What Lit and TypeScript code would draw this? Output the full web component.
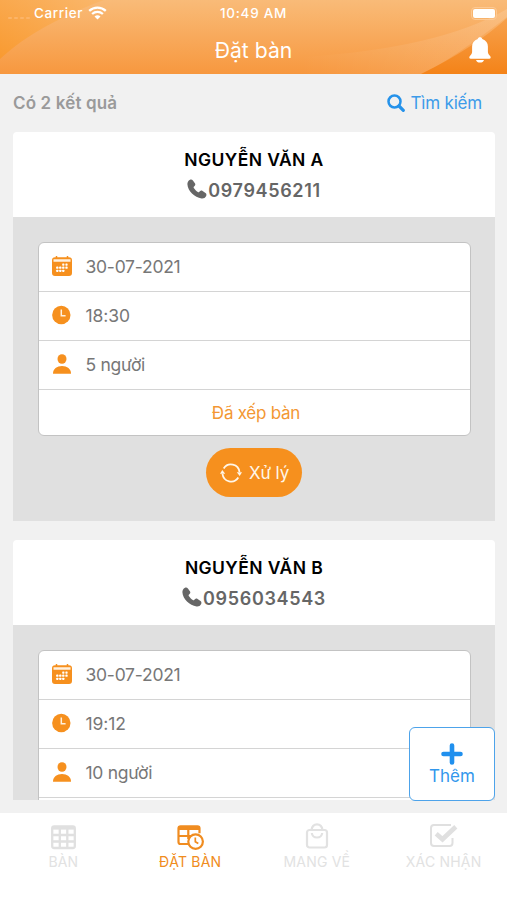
import { LitElement, html, css, svg } from "lit";
import { customElement, property } from "lit/decorators.js";

const wifi = svg`<svg width="19" height="14" viewBox="0 0 19 14" fill="none" stroke="#fff" stroke-width="2.3"><path d="M1.2 4.9a12 12 0 0 1 16.6 0M4.1 8a8 8 0 0 1 10.8 0"/><path d="M9.5 13.6 6.5 10.6a4.3 4.3 0 0 1 6 0z" fill="#fff" stroke="none"/></svg>`;

const bell = svg`<svg width="24" height="27" viewBox="0 0 24 27" fill="#fff"><path d="M12 .3c-1.200 0-2 .7-2.300 1.600C6 3 4.100 6 4.100 9.500v5.200c0 1.600-.6 2.600-2 4.100-1.300 1.400-1 2.900.7 2.900h18.400c1.700 0 2-1.500.7-2.900-1.400-1.500-2-2.500-2-4.100V9.500c0-3.500-1.900-6.500-5.600-7.600C14 1 13.200.3 12 .3z"/><path d="M8 23h8c-.4 1.700-1.900 2.600-4 2.600S8.400 24.700 8 23z"/></svg>`;

const search = svg`<svg width="18" height="18" viewBox="0 0 18 18" fill="none" stroke="#2592ea"><circle cx="7.500" cy="7.500" r="6" stroke-width="2.500"/><path d="m12 12 4.300 4.300" stroke-width="3.200" stroke-linecap="round"/></svg>`;

const phone = svg`<svg width="20" height="20" viewBox="0 0 20 20" fill="#666"><path d="M3 .7C4 .2 5.200.5 5.900 1.400l2 2.900c.7 1 .5 2-.3 2.700l-.8.8c-.3.4-.3.8 0 1.300 1 1.500 2.500 3 4 4 .5.300.9.300 1.300 0l.8-.8c.7-.8 1.700-1 2.700-.3l2.900 2c.9.700 1.200 1.900.7 2.900-.9 1.800-2.600 2.700-4.600 2.500C7.600 18.700.8 12 .4 5.300.3 3.300 1.200 1.600 3 .7z"/></svg>`;

const dots = [
  [11.2, 8.5], [14.4, 8.5],
  [5.2, 11.6], [8.2, 11.6], [11.2, 11.6], [14.4, 11.6],
  [5.2, 14.7], [8.2, 14.7], [11.2, 14.7],
];
const calendar = svg`<svg width="20" height="20" viewBox="0 0 20 20"><path d="M3 1.300h14a3 3 0 0 1 3 3V17a3 3 0 0 1-3 3H3a3 3 0 0 1-3-3V4.300a3 3 0 0 1 3-3z" fill="#f6901e"/><path d="M4.500 0v2M15.500 0v2" stroke="#f6901e" stroke-width="1.500"/><path d="M1.500 3.300h17v2.500h-17z" fill="#fff1df"/>${dots.map(([x, y]) => svg`<rect x=${x - 1} y=${y - 1} width="2.2" height="2.2" rx=".6" fill="#fff"/>`)}</svg>`;

const clock = svg`<svg width="20" height="20" viewBox="0 0 20 20"><circle cx="9.300" cy="10" r="9.200" fill="#f6901e"/><path d="M9.300 4.600v6.200h4.300" fill="none" stroke="#fff0dc" stroke-width="1.500"/></svg>`;

const person = svg`<svg width="20" height="20" viewBox="0 0 20 20" fill="#f6901e"><ellipse cx="10" cy="5" rx="4.500" ry="4.800"/><path d="M1 19.700c-.2-4.800 4-7.800 9-7.800s9.200 3 9 7.800z"/></svg>`;

const sync = svg`<svg width="22" height="20" viewBox="0 0 22 20" fill="none" stroke="#fff6e8" stroke-width="1.800"><path d="M3.700 5.400A8.600 8.600 0 0 1 19.500 9M18.300 14.600A8.600 8.600 0 0 1 2.500 11"/><path d="M22 9.200h-5.200l2.900 3.800zM0 10.800h5.200L2.300 7z" fill="#fff6e8" stroke="none"/></svg>`;

const plus = svg`<svg width="22" height="22" viewBox="0 0 22 22" stroke="#2090ee" stroke-width="4.600" stroke-linecap="round"><path d="M11 2.500v17M2.500 11h17"/></svg>`;

const tableIcon = svg`<svg width="28" height="28" viewBox="0 0 28 28" fill="none" stroke="#e0e0e0" stroke-width="2.300"><rect x="3.200" y="4.500" width="22.600" height="21.500" rx="2"/><path d="M3 5.800h23" stroke-width="3.600"/><path d="M3 13h23M3 19.500h23M10.800 5v21M18.300 5v21"/></svg>`;

const bookingIcon = svg`<svg width="28" height="28" viewBox="0 0 28 28" fill="none" stroke="#f08c20" stroke-width="2.200"><path d="M12 22H4.500a2 2 0 0 1-2-2V6.300a2 2 0 0 1 2-2h17a2 2 0 0 1 2 2v5"/><path d="M2.500 6h21" stroke-width="4"/><path d="M2.500 14H15M12.300 6v11"/><circle cx="19.600" cy="19.600" r="7.300" fill="#fff"/><path d="M19.300 15.400v4.400l3 1.800" stroke-width="1.700"/></svg>`;

const bagIcon = svg`<svg width="28" height="28" viewBox="0 0 28 28" fill="none" stroke="#e2e2e2" stroke-width="2.200"><rect x="4" y="8" width="20" height="17.500" rx="2.500"/><path d="M8.500 8C9 4 11 2.300 14 2.300S19 4 19.500 8M8.800 11c.4 3.500 2.300 4.500 5.200 4.500s4.800-1 5.200-4.500"/></svg>`;

const checkIcon = svg`<svg width="28" height="28" viewBox="0 0 28 28" fill="none" stroke="#e0e0e0" stroke-width="2"><path d="M21 3H4a3 3 0 0 0-3 3v15a3 3 0 0 0 3 3h15.500a3 3 0 0 0 3-3v-5"/><path d="m6.200 11.800 6.300 5.500L25.800 4.800" stroke-width="4.600"/></svg>`;

@customElement("booking-card")
class BookingCard extends LitElement {
  @property() name = "";
  @property() phone = "";
  @property() date = "";
  @property() time = "";
  @property() guests = "";

  static styles = css`
    :host { display: block; }
    * { box-sizing: border-box; }
    svg { display: block; flex: none; }
    .head { height: 85px; background: #fff; border-radius: 4px 4px 0 0; display: flex; flex-direction: column; align-items: center; padding-top: 16px; }
    .name { font-size: 17.5px; line-height: 24px; font-weight: 600; color: #000; letter-spacing: 0.4px; }
    .phone { display: flex; align-items: center; gap: 1px; margin-top: 7px; color: #666; font-size: 18px; line-height: 24px; font-weight: 600; letter-spacing: 0.65px; }
    .phone svg { position: relative; top: -2px; }
    .body { background: #e0e0e0; height: 304px; padding: 25px 24px 0; display: flex; flex-direction: column; align-items: center; }
    .box { width: 433px; height: 194px; border: 1px solid #c3c3c3; border-radius: 6px; background: #fff; overflow: hidden; }
    .row { height: 49px; padding: 0 0 2px 13px; display: flex; align-items: center; gap: 14px; border-bottom: 1px solid #d4d4d4; font-size: 17.5px; color: #777; }
    .status { height: 45px; display: flex; align-items: center; justify-content: center; color: #f39733; font-size: 17px; }
    .date { letter-spacing: -0.25px; }
    .time { letter-spacing: -0.1px; }
    .guests { letter-spacing: -0.3px; }
    .status span { letter-spacing: -0.25px; margin-left: 4px; }
    .process { margin-top: 12px; width: 96px; height: 49px; border-radius: 25px; background: #f6901e; display: flex; align-items: center; padding-left: 14px; gap: 7px; color: #fff6e8; font-size: 17px; letter-spacing: -0.1px; flex: none; }
  `;

  render() {
    return html`
      <div class="head">
        <div class="name">${this.name}</div>
        <div class="phone">${phone}<span>${this.phone}</span></div>
      </div>
      <div class="body">
        <div class="box">
          <div class="row">${calendar}<span class="date">${this.date}</span></div>
          <div class="row">${clock}<span class="time">${this.time}</span></div>
          <div class="row">${person}<span class="guests">${this.guests}</span></div>
          <div class="status"><span>Đã xếp bàn</span></div>
        </div>
        <div class="process">${sync}<span>Xử lý</span></div>
      </div>
    `;
  }
}

@customElement("app-root")
class AppRoot extends LitElement {
  static styles = css`
    :host { display: flex; flex-direction: column; width: 507px; height: 900px; overflow: hidden; background: #f1f1f1; font-family: Inter, "Noto Sans", sans-serif; position: relative; }
    * { box-sizing: border-box; }
    svg { display: block; flex: none; }
    header { height: 74px; flex: none; position: relative; color: #fff; overflow: hidden; }
    .art { position: absolute; inset: 0; }
    .statusbar { position: relative; height: 26px; display: grid; grid-template-columns: 1fr auto 1fr; align-items: center; font-size: 13.5px; font-weight: 500; }
    .carrier { display: flex; align-items: center; padding-left: 8px; }
    .carrier span { letter-spacing: 0.6px; margin-right: 5px; }
    .signal { display: flex; gap: 2px; width: 26px; padding-top: 9px; }
    .signal i { width: 4px; height: 2px; border-radius: 1px; background: #fcb468; }
    .clock { letter-spacing: 0.7px; }
    .power { display: flex; justify-content: flex-end; padding-right: 10px; }
    .battery { width: 26px; height: 13px; border: 1px solid #fcc994; border-radius: 4px; padding: 1px; }
    .charge { height: 9px; border-radius: 2px; background: #fff; }
    .titlebar { position: relative; height: 48px; display: grid; grid-template-columns: 1fr auto 1fr; align-items: center; }
    .title { grid-column: 2; font-size: 21.2px; }
    .bell { justify-self: end; margin-right: 15px; }
    .toolbar { height: 58px; flex: none; display: flex; align-items: center; justify-content: space-between; padding: 0 25px 0 13px; }
    .count { font-size: 17px; font-weight: 600; color: #9a9a9a; letter-spacing: 0.15px; }
    .search { display: flex; align-items: center; gap: 6px; color: #3c9be9; font-size: 17px; letter-spacing: -0.2px; }
    .list { height: 668px; flex: none; overflow: hidden; padding: 0 12px 0 13px; display: flex; flex-direction: column; gap: 19px; }
    .list > * { flex: none; }
    .add { position: absolute; left: 409px; top: 727px; width: 86px; height: 74px; border: 1.5px solid #4da3ea; border-radius: 6px; background: #fff; display: flex; flex-direction: column; align-items: center; padding-top: 15px; color: #3297ec; font-size: 17px; line-height: 22px; }
    nav { margin-top: 13px; height: 87px; flex: none; background: #fff; display: grid; grid-template-columns: repeat(4, 1fr); padding-top: 9px; }
    .tab { display: flex; flex-direction: column; align-items: center; color: #e2e2e2; font-size: 14px; line-height: 20px; gap: 2px; white-space: nowrap; letter-spacing: 0.2px; }
    .tab.active { color: #f08c20; }
  `;

  private tabs = [
    { label: "BÀN", icon: tableIcon },
    { label: "ĐẶT BÀN", icon: bookingIcon, active: true },
    { label: "MANG VỀ", icon: bagIcon },
    { label: "XÁC NHẬN", icon: checkIcon },
  ];

  render() {
    return html`
      <header>
        <svg class="art" width="507" height="74" viewBox="0 0 507 74">
          <defs>
            <linearGradient id="base" x1="0" y1="0" x2="0" y2="1"><stop offset="0" stop-color="#f9bb78"/><stop offset="1" stop-color="#f7983f"/></linearGradient>
            <linearGradient id="left" x1="0" y1="1" x2="1" y2="0"><stop offset="0" stop-color="#f99a30"/><stop offset="1" stop-color="#fab76b"/></linearGradient>
            <linearGradient id="right" x1="0" y1="0" x2="0" y2="1"><stop offset="0" stop-color="#f7a14c"/><stop offset="1" stop-color="#f48318"/></linearGradient>
            <linearGradient id="swoosh" x1="0" y1="0" x2="1" y2="0"><stop offset="0" stop-color="#fff" stop-opacity="0"/><stop offset="1" stop-color="#fff" stop-opacity=".14"/></linearGradient>
          </defs>
          <rect width="507" height="74" fill="url(#base)"/>
          <path d="M0 0h104C64 15 27 34 0 59z" fill="url(#left)"/>
          <path d="M300 57Q438 49 507 9v8Q455 57 423 74H300z" fill="url(#swoosh)"/>
          <path d="M507 18Q474 48 421 74h86z" fill="url(#right)"/>
        </svg>
        <div class="statusbar">
          <div class="carrier"><div class="signal"><i></i><i></i><i></i><i></i></div><span>Carrier</span>${wifi}</div>
          <div class="clock">10:49 AM</div>
          <div class="power"><div class="battery"><div class="charge"></div></div></div>
        </div>
        <div class="titlebar"><div class="title">Đặt bàn</div><div class="bell">${bell}</div></div>
      </header>
      <div class="toolbar">
        <div class="count">Có 2 kết quả</div>
        <div class="search">${search}<span>Tìm kiếm</span></div>
      </div>
      <div class="list">
        <booking-card name="NGUYỄN VĂN A" phone="0979456211" date="30-07-2021" time="18:30" guests="5 người"></booking-card>
        <booking-card name="NGUYỄN VĂN B" phone="0956034543" date="30-07-2021" time="19:12" guests="10 người"></booking-card>
      </div>
      <nav>
        ${this.tabs.map((t) => html`<div class="tab ${t.active ? "active" : ""}">${t.icon}<span>${t.label}</span></div>`)}
      </nav>
      <div class="add">${plus}<span>Thêm</span></div>
    `;
  }
}
